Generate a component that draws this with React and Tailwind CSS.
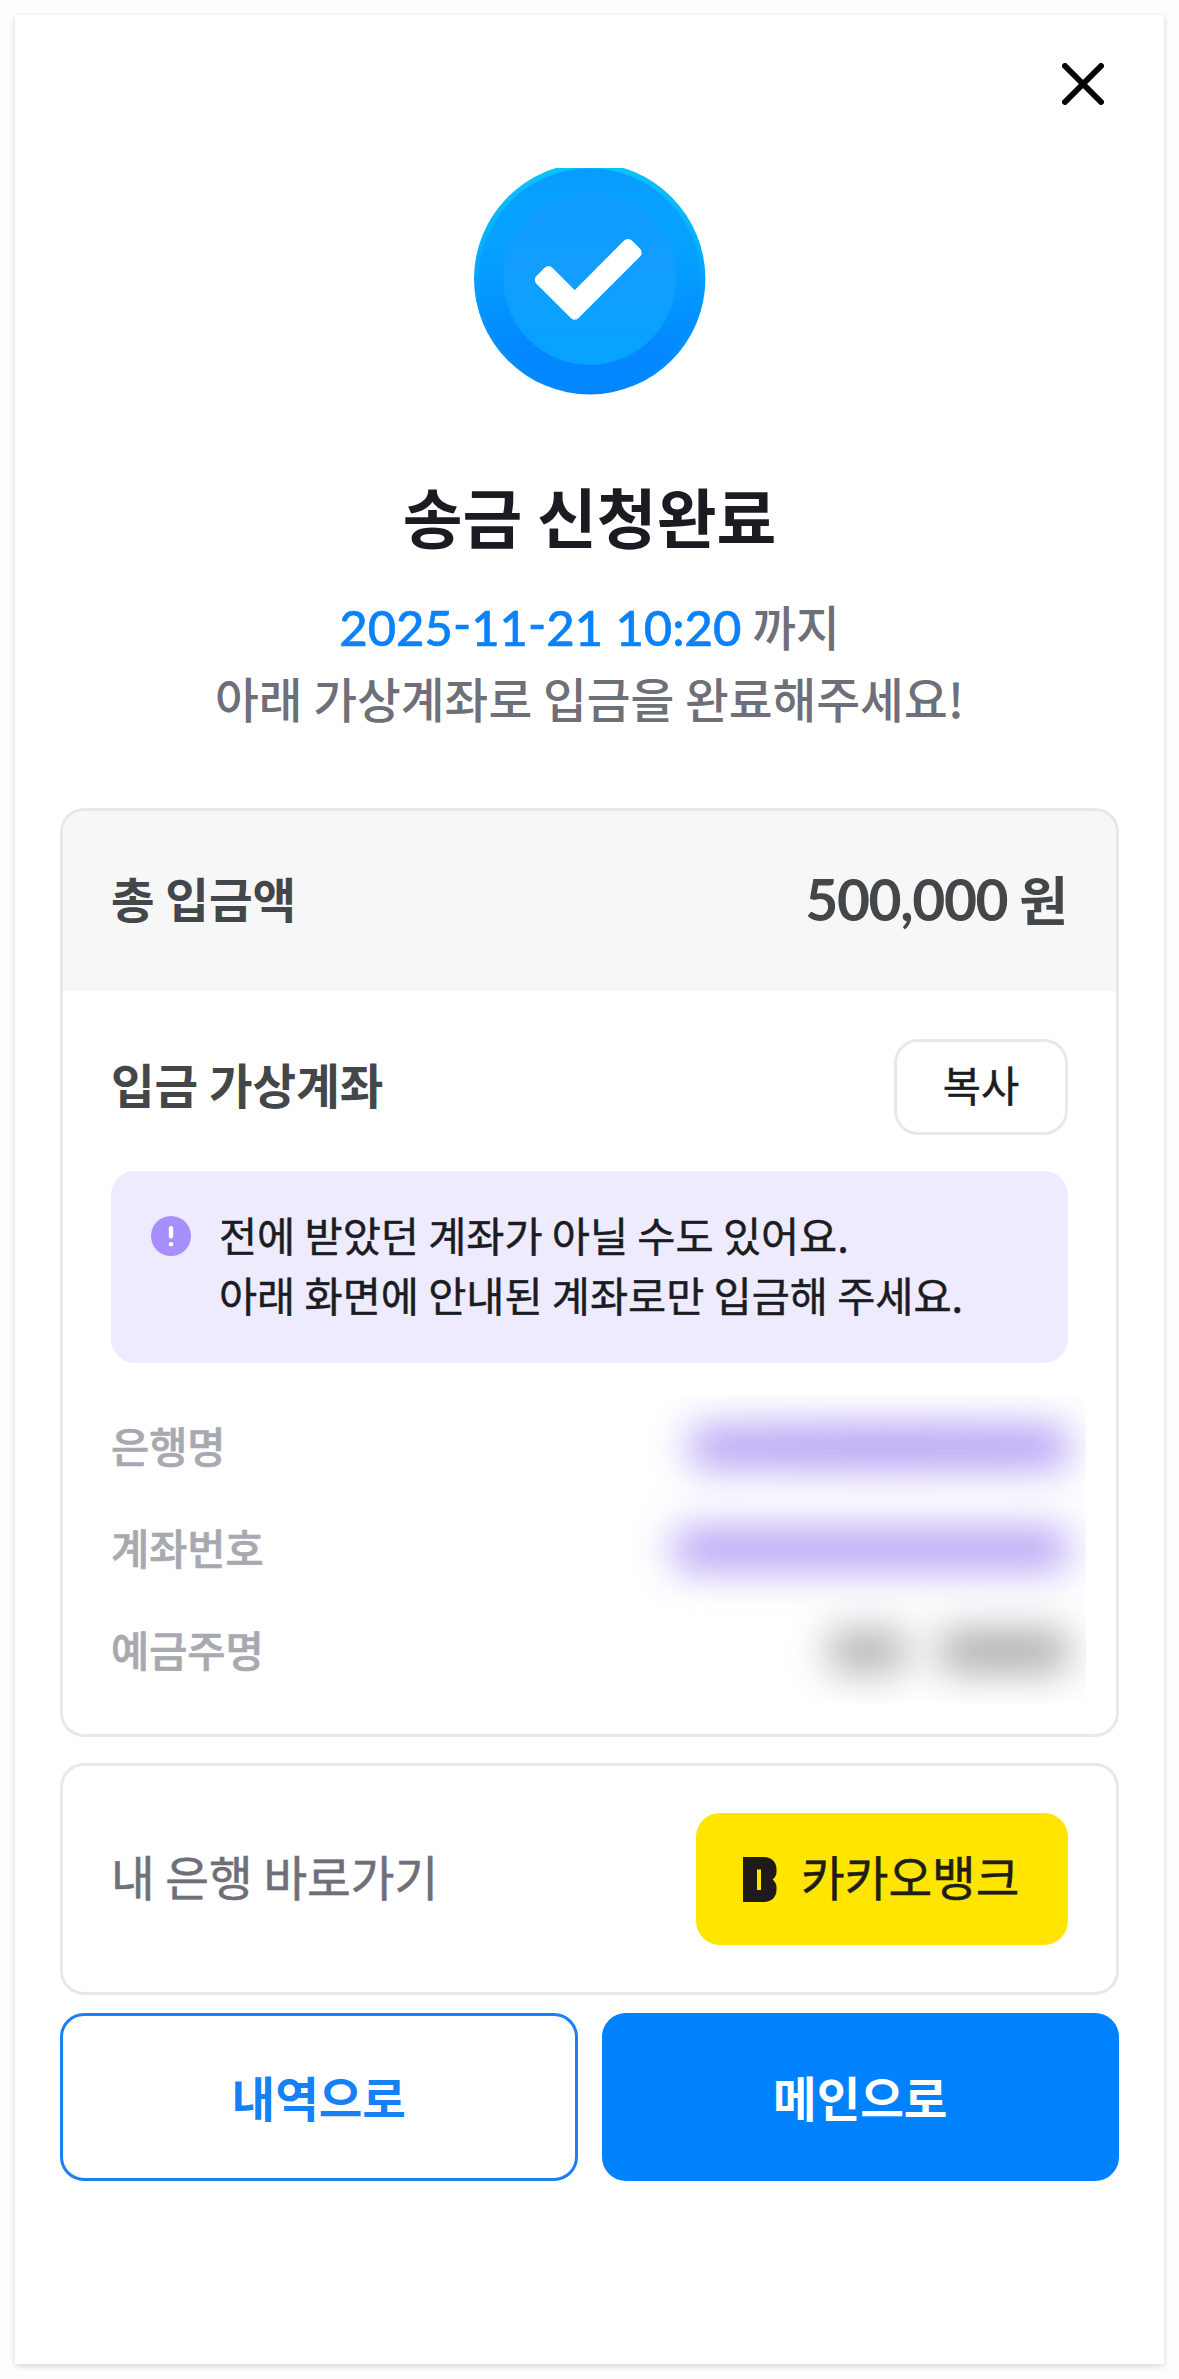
import React from "react";

const accountRows = [
  {
    label: "은행명",
    bars: ["w-[378px] bg-linear-to-r from-[#b09cf4] via-[#a892f3] to-[#ad98f4]"],
  },
  { label: "계좌번호", bars: ["w-[394px] bg-[#b09cf4]"] },
  { label: "예금주명", bars: ["w-[78px] bg-[#acacaf]", "w-[128px] bg-[#a6a6aa]"] },
];

function CloseIcon() {
  return (
    <svg width="42" height="42" viewBox="0 0 42 42" fill="none">
      <path d="M3 3L39 39M39 3L3 39" stroke="#050505" strokeWidth="6" strokeLinecap="round" />
    </svg>
  );
}

function SuccessBadge() {
  return (
    <svg width="232" height="227" viewBox="0 0 232 227" fill="none">
      <defs>
        <linearGradient id="rim" x1="0" y1="0" x2="0" y2="1">
          <stop offset="0" stopColor="#08c4fb" />
          <stop offset="0.35" stopColor="#06b0fd" />
          <stop offset="0.65" stopColor="#0494ff" />
          <stop offset="1" stopColor="#0386ff" />
        </linearGradient>
        <linearGradient id="disc" x1="0" y1="0" x2="0" y2="1">
          <stop offset="0" stopColor="#0a9bfd" />
          <stop offset="0.15" stopColor="#07a1ff" />
          <stop offset="0.35" stopColor="#06a1ff" />
          <stop offset="0.6" stopColor="#0396ff" />
          <stop offset="0.8" stopColor="#0388ff" />
          <stop offset="1" stopColor="#0386ff" />
        </linearGradient>
        <linearGradient id="core" x1="0" y1="0" x2="0" y2="1">
          <stop offset="0" stopColor="#0f9cff" />
          <stop offset="0.45" stopColor="#129dff" />
          <stop offset="1" stopColor="#05a3ff" />
        </linearGradient>
      </defs>
      <circle cx="115.7" cy="110.7" r="115.7" fill="url(#rim)" />
      <circle cx="115.7" cy="111.5" r="111.2" fill="url(#disc)" />
      <circle cx="115.7" cy="110.5" r="86.4" fill="url(#core)" />
      <path
        d="M74.5 103.6L66.3 111.8L100.7 146.2L162.2 84.7L154 76.5L100.7 129.8Z"
        fill="#fff"
        stroke="#fff"
        strokeWidth="11"
        strokeLinejoin="round"
      />
    </svg>
  );
}

function NoticeIcon() {
  return (
    <svg width="40" height="40" viewBox="0 0 40 40" className="shrink-0">
      <circle cx="20" cy="20" r="20" fill="#a78ffd" />
      <rect x="17.8" y="10" width="4.4" height="12.5" rx="2.2" fill="#fff" />
      <circle cx="20" cy="28.3" r="2.2" fill="#fff" />
    </svg>
  );
}

function BankLogo() {
  return (
    <svg width="34" height="45" viewBox="0 0 34 45">
      <path
        fillRule="evenodd"
        d="M0 0H21C28.5 0 33.5 5 33.5 12V15C33.5 18 32 20.5 29.5 22.5C32 24.5 33.5 27 33.5 30V33C33.5 40 28.5 45 21 45H0ZM14 12.5V33H18V12.5Z"
        fill="#201a1b"
      />
    </svg>
  );
}

export default function App() {
  return (
    <div className="h-[2379px] w-[1179px] bg-[#fdfdfd] p-[15px] font-['Noto_Sans_CJK_KR','Lato',sans-serif] whitespace-nowrap">
      <main className="flex h-full flex-col bg-white px-[45px] shadow-[0_2px_6px_rgba(0,0,0,0.16)]">
        <div className="flex justify-end pt-[48px] pr-[15px]">
          <button>
            <CloseIcon />
          </button>
        </div>

        <div className="mt-[63px] flex justify-center">
          <SuccessBadge />
        </div>

        <h1 className="mt-[80px] text-center text-[65px] leading-[80px] font-bold text-[#1b1c22]">
          송금 신청완료
        </h1>
        <p className="mt-[35px] text-center text-[47.6px] leading-[72px] font-medium text-[#6e6f78]">
          <span className="font-['Lato'] text-[49px] leading-none text-[#0b82fb] [-webkit-text-stroke:0.6px_#0b82fb]">
            2025<span className="align-[4px]">-</span>11<span className="align-[4px]">-</span>21 10:20
          </span>{" "}
          까지
          <br />
          아래 가상계좌로 입금을 완료해주세요!
        </p>

        <section className="mt-[74px] h-[929px] overflow-hidden rounded-[24px] border-[3px] border-[#e8e8ea]">
          <div className="flex h-[180px] items-center justify-between bg-[#f7f7f8] px-[48px] pb-[6px] font-bold text-[#444749]">
            <span className="text-[47.4px] leading-[60px]">총 입금액</span>
            <span className="text-[53px] leading-[60px]">
              <span className="font-['Lato'] text-[57px] tracking-[-1.4px]">500,000</span> 원
            </span>
          </div>

          <div className="px-[48px] pt-[48px]">
            <div className="flex h-[96px] items-center justify-between">
              <span className="pb-[6px] text-[47.4px] leading-[60px] font-bold text-[#444749]">입금 가상계좌</span>
              <button className="h-[96px] w-[174px] rounded-[24px] border-[3px] border-[#e8e8ea] pb-[6px] text-[41.5px] leading-[60px] text-[#1b1c22] [-webkit-text-stroke:0.5px_#1b1c22]">
                복사
              </button>
            </div>

            <div className="mt-[36px] flex h-[192px] gap-[28px] rounded-[24px] bg-[#efebfe] pt-[33px] pl-[40px]">
              <div className="pt-[12px]">
                <NoticeIcon />
              </div>
              <p className="text-[41.45px] leading-[60px] text-[#1b1c22] [-webkit-text-stroke:0.5px_#1b1c22]">
                전에 받았던 계좌가 아닐 수도 있어요.
                <br />
                아래 화면에 안내된 계좌로만 입금해 주세요.
              </p>
            </div>

            <div className="-mr-[18px] mt-[33px] overflow-hidden pr-[18px] pb-[1px]">
              {accountRows.map((row) => (
                <div key={row.label} className="flex h-[102px] items-center justify-between">
                  <span className="pb-[5px] text-[41.5px] leading-[60px] font-medium text-[#a8a9b0] [-webkit-text-stroke:0.7px_#a8a9b0]">
                    {row.label}
                  </span>
                  <div className="flex gap-[34px]">
                    {row.bars.map((bar) => (
                      <span key={bar} className={`h-[40px] rounded-lg blur-[20px] ${bar}`} />
                    ))}
                  </div>
                </div>
              ))}
            </div>
          </div>
        </section>

        <section className="mt-[26px] flex h-[232px] items-center justify-between rounded-[24px] border-[3px] border-[#e8e8ea] px-[48px] text-[47.5px] leading-[60px]">
          <span className="pb-[6px] text-[#6e6f78] [-webkit-text-stroke:0.6px_#6e6f78]">내 은행 바로가기</span>
          <button className="flex h-[132px] w-[372px] items-center gap-[24px] rounded-[24px] bg-[#ffe500] pl-[47px] text-[#201d17] [-webkit-text-stroke:0.5px_#201d17]">
            <BankLogo />
            <span className="pb-[6px]">카카오뱅크</span>
          </button>
        </section>

        <div className="mt-[18px] grid grid-cols-2 gap-[24px] text-[47.4px] leading-[60px] font-bold">
          <button className="h-[168px] rounded-[24px] border-[3px] border-[#1b80f2] text-[#1680f7]">내역으로</button>
          <button className="h-[168px] rounded-[24px] bg-[#0082ff] text-white">메인으로</button>
        </div>
      </main>
    </div>
  );
}
